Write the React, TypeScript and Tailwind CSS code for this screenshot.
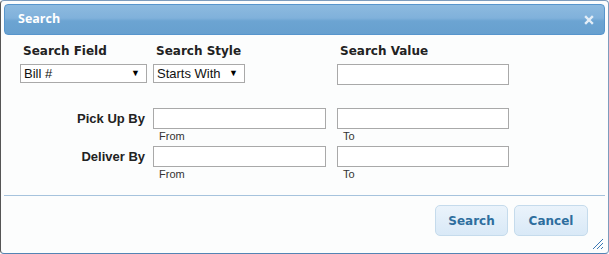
import React from "react";

const lbl = "font-['DejaVu_Sans',sans-serif] font-bold text-[12px] text-[#222]";
const inp = "h-[21px] border border-[#a9a9a9] bg-white";
const sub = "font-['Liberation_Sans',sans-serif] text-[11px] leading-none text-[#333] pl-[6px] pt-[2px]";

function Select({ w, text }: { w: string; text: string }) {
  return (
    <div className={`${w} h-[19px] border border-[#a9a9a9] bg-white flex items-center justify-between pl-[3px] pr-[6px] font-['Liberation_Sans',sans-serif] text-[13px] text-[#111]`}>
      <span>{text}</span>
      <span className="text-[9px] text-black">▼</span>
    </div>
  );
}

export default function App() {
  return (
    <div className="w-[609px] h-[254px] bg-white">
      <div className="w-[609px] h-[254px] rounded-[4px] border border-[#7d9cbd] border-l-[#555] border-b-[#5384b4] bg-[#fcfdfd] p-[3px] flex flex-col">
        <div className="h-[31px] rounded-[4px] border border-[#5795cc] bg-[linear-gradient(to_bottom,#8dbadf_0%,#80b1db_45%,#6ca4d2_55%,#67a0cf_100%)] flex items-center justify-between pl-[13px] pr-[10px]">
          <span className="font-['Open_Sans',sans-serif] font-bold text-[12.5px] text-white">Search</span>
          <svg width="10" height="10" viewBox="0 0 10 10">
            <path d="M2 2 L8 8 M8 2 L2 8" stroke="#e4eef7" strokeWidth="2.4" strokeLinecap="square" />
          </svg>
        </div>
        <div className="flex-1 flex flex-col">
          <div className="pt-[7px] pl-[16px] flex">
            <div className="w-[133px] flex flex-col">
              <div className={`${lbl} pl-[3px] h-[19px] leading-[19px]`}>Search Field</div>
              <div className="mt-[3px]"><Select w="w-[127px]" text="Bill #" /></div>
            </div>
            <div className="w-[184px] flex flex-col">
              <div className={`${lbl} pl-[3px] h-[19px] leading-[19px]`}>Search Style</div>
              <div className="mt-[3px]"><Select w="w-[92px]" text="Starts With" /></div>
            </div>
            <div className="flex flex-col">
              <div className={`${lbl} pl-[3px] h-[19px] leading-[19px]`}>Search Value</div>
              <div className={`${inp} mt-[3px] w-[172px]`} />
            </div>
          </div>
          <div className="mt-[23px] flex flex-col gap-[4px]">
            {["Pick Up By", "Deliver By"].map((t) => (
              <div key={t} className="flex">
                <div className="w-[146px] h-[21px] flex items-center justify-end pr-[5px] font-['Liberation_Sans',sans-serif] font-bold text-[13px] text-[#222]">{t}</div>
                <div className="ml-[3px] w-[173px] flex flex-col">
                  <div className={`${inp}`} />
                  <div className={sub}>From</div>
                </div>
                <div className="ml-[11px] w-[172px] flex flex-col">
                  <div className={`${inp}`} />
                  <div className={sub}>To</div>
                </div>
              </div>
            ))}
          </div>
          <div className="mt-auto border-t border-[#a6c3dd] h-[55px] flex justify-end items-start pt-[9px] pr-[17px] gap-[6px] relative">
            <button className="w-[73px] h-[31px] rounded-[5px] border border-[#c5dbec] bg-[linear-gradient(to_bottom,#eaf3fb,#d9e9f7)] font-['DejaVu_Sans',sans-serif] font-bold text-[12px] text-[#2e6e9e]">Search</button>
            <button className="w-[74px] h-[31px] rounded-[5px] border border-[#c5dbec] bg-[linear-gradient(to_bottom,#eaf3fb,#d9e9f7)] font-['DejaVu_Sans',sans-serif] font-bold text-[12px] text-[#2e6e9e]">Cancel</button>
            <svg className="absolute right-[1px] bottom-[0px]" width="12" height="12" viewBox="0 0 12 12">
              <path d="M11 1 L1 11 M11 5 L5 11 M11 9 L9 11" stroke="#3b78b5" strokeWidth="1" />
            </svg>
          </div>
        </div>
      </div>
    </div>
  );
}
